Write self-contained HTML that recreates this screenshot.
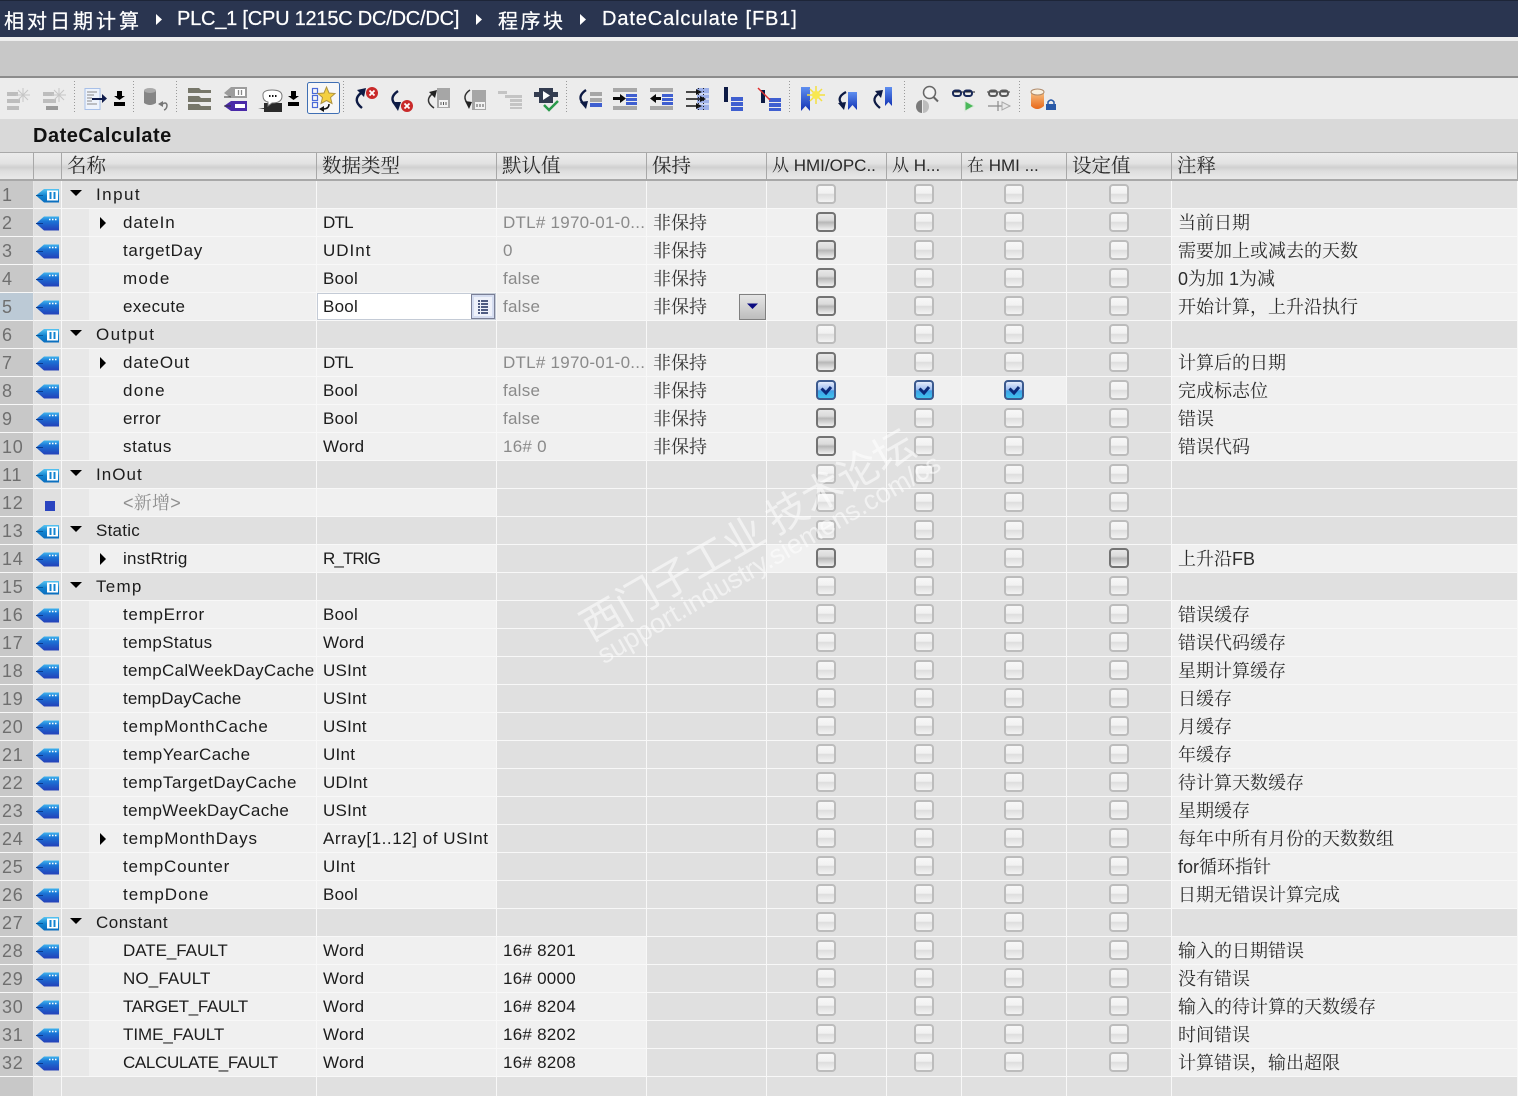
<!DOCTYPE html>
<html><head><meta charset="utf-8"><title>DateCalculate</title>
<style>
html,body{margin:0;padding:0;width:1518px;height:1096px;overflow:hidden;background:#e0e0e0}
body{position:relative;font-family:"Liberation Sans","Noto Serif CJK SC",serif;color:#1c1c1c}
.abs{position:absolute;white-space:nowrap}
#top{left:0;top:0;width:1518px;height:37px;background:#2a3550;border-top:1px solid #1d2538;box-sizing:border-box}
.tt{top:1px;height:37px;line-height:37px;color:#fff;font-size:20px;-webkit-text-stroke:.25px #fff;position:absolute;white-space:nowrap}
#h{left:0;top:152px;width:1518px;height:29px;display:flex;border-top:1px solid #a9a9a9;border-bottom:2px solid #a8a8a8;box-sizing:border-box}
#h div{box-sizing:border-box;border-right:1px solid #a8a8a8;background:linear-gradient(#ececec 0,#e2e2e2 40%,#d0d0d0 55%,#dedede 70%,#e9e9e9 100%);font-size:19.5px;line-height:26px;padding-left:5px;white-space:nowrap;overflow:hidden;color:#2a2a2a}
#h .l{font-size:17px}
.r{display:flex;height:28px}
.r p{margin:0;box-sizing:border-box;height:28px;border-right:1px solid #f8f8f8;border-bottom:1px solid #f8f8f8;background:#e0e0e0;overflow:hidden;white-space:nowrap;line-height:28px;font-size:17px;letter-spacing:.25px;position:relative}
.r p:nth-child(1){width:34px;background:#c8c8c8;color:#6f6f6f;padding-left:2px;font-size:18px;letter-spacing:.8px;border-right-color:#e6e6e6}
.r p:nth-child(2){width:28px}
.r p:nth-child(3){width:255px;background:linear-gradient(90deg,#e8e8e8 27px,#f0f0f0 27px);padding-left:61px}
.r p:nth-child(4){width:180px;background:#f0f0f0;padding-left:6px}
.r p:nth-child(5){width:150px;padding-left:6px;color:#8a8a8a}
.r p:nth-child(6){width:120px;padding-left:6px;font-size:18px;letter-spacing:0;color:#333}
.r p:nth-child(7){width:120px}
.r p:nth-child(8){width:75px}
.r p:nth-child(9){width:105px}
.r p:nth-child(10){width:105px}
.r p:nth-child(11){width:346px;background:#f0f0f0;padding-left:6px;font-size:18px;letter-spacing:0;color:#2c2c2c}
.g p:nth-child(3){background:#e0e0e0;padding-left:34px}
.g p:nth-child(4),.g p:nth-child(11){background:#e0e0e0}
.a p:nth-child(5),.a p:nth-child(6),.a p:nth-child(7),.k p:nth-child(5),.s p:nth-child(7),.d p:nth-child(8),.d p:nth-child(9){background:#f0f0f0}
.k p:nth-child(5){color:#1c1c1c}
.n p:nth-child(11){background:#e0e0e0}
.r a{position:absolute;top:3px;width:20px;height:20px;box-sizing:border-box;border:2px solid #bcbcbc;border-radius:4px;background:linear-gradient(#f8f8f8 0,#f1f1f1 45%,#dedede 52%,#f3f3f3 100%)}
.r p:nth-child(7) a{left:49px}.r p:nth-child(8) a{left:27px}.r p:nth-child(9) a{left:42px}.r p:nth-child(10) a{left:42px}
.a p:nth-child(7) a,.s p:nth-child(7) a,.s p:nth-child(10) a{border-color:#737373;background:linear-gradient(#e8e8e8 0,#dadada 38%,#b8b8b8 52%,#f0f0f0 100%)}
.r a.c,.a p:nth-child(7) a.c{border-color:#3c5a8e;background:linear-gradient(#e4ecfc 0,#9dbcf0 48%,#3f9fe6 55%,#3fc4ee 100%)}
.r a.c svg{position:absolute;left:1px;top:1px}
.r svg.t{position:absolute;left:2px;top:7px}
.dn{position:absolute;left:8px;top:9px;border-left:6px solid transparent;border-right:6px solid transparent;border-top:6px solid #000}
.rt{position:absolute;left:38px;top:8px;border-top:6px solid transparent;border-bottom:6px solid transparent;border-left:6px solid #000}
#wm{position:absolute;left:0;top:0;pointer-events:none}
</style></head><body>
<svg width="0" height="0" style="position:absolute"><defs>
<linearGradient id="gb" x1="0" y1="0" x2="0" y2="1"><stop offset="0" stop-color="#56c4f2"/><stop offset=".5" stop-color="#1283d0"/><stop offset="1" stop-color="#0b6dbd"/></linearGradient>
<linearGradient id="ib" x1="0" y1="0" x2="0" y2="1"><stop offset="0" stop-color="#3fb4ee"/><stop offset=".35" stop-color="#1b74d6"/><stop offset="1" stop-color="#2440b8"/></linearGradient>
<linearGradient id="bm" x1="0" y1="0" x2="0" y2="1"><stop offset="0" stop-color="#5f8ff0"/><stop offset="1" stop-color="#1233b4"/></linearGradient>
<linearGradient id="or" x1="0" y1="0" x2="0" y2="1"><stop offset="0" stop-color="#f8c080"/><stop offset="1" stop-color="#e8681a"/></linearGradient>
<symbol id="tg" viewBox="0 0 24 15"><path d="M0 7.5L8 1H23V14.500H8Z" fill="url(#gb)"/><path d="M0 7.5H7" stroke="#0a5a9e"/><rect x="11" y="2.500" width="11" height="10" fill="#fff"/><path d="M14.500 4V11M18.500 4V11" stroke="#1283d0" stroke-width="2"/></symbol>
<symbol id="ti" viewBox="0 0 24 15"><path d="M0 7.5L8 .5H23V14.500H8Z" fill="url(#ib)"/><path d="M0 7.5H7" stroke="#0a3a8e"/><path d="M13 3.500H14.500M16 3.500H17.500M19 3.500H20.500" stroke="#fff" stroke-width="1.600"/></symbol>
</defs></svg>

<div class="abs" id="top"></div>
<span class="tt" style="left:4px;font-family:'Noto Sans CJK SC',sans-serif;letter-spacing:3px">相对日期计算</span>
<span class="tt" style="left:177px;letter-spacing:-.22px">PLC_1 [CPU 1215C DC/DC/DC]</span>
<span class="tt" style="left:498px;font-family:'Noto Sans CJK SC',sans-serif;letter-spacing:2.500px">程序块</span>
<span class="tt" style="left:602px;letter-spacing:.88px">DateCalculate [FB1]</span>
<div class="abs" style="left:0;top:37px;width:1518px;height:4px;background:#eeeeee"></div>
<div class="abs" style="left:0;top:41px;width:1518px;height:35px;background:#c8c8c8"></div>
<div class="abs" style="left:0;top:76px;width:1518px;height:2px;background:#8c8c8c"></div>
<div class="abs" style="left:0;top:78px;width:1518px;height:41px;background:#ececec"></div>
<div class="abs" style="left:0;top:119px;width:1518px;height:33px;background:#d9d9d9"></div>
<div class="abs" style="left:33px;top:123px;font-size:20px;line-height:26px;font-weight:bold;letter-spacing:.5px;color:#111">DateCalculate</div>

<!-- toolbar -->
<svg class="abs" style="left:0;top:0" width="1518" height="120" viewBox="0 0 1518 120">
<path d="M156 14L162 19.500L156 25ZM476 14L482 19.500L476 25ZM580 14L586 19.500L580 25Z" fill="#fff"/>
<g stroke="#9a9a9a" stroke-width="1" stroke-dasharray="1 2"><path d="M74.500 81V114M133.500 81V114M176.500 81V114M343.500 81V114M566.500 81V114M789.500 81V114M904.500 81V114M1019.500 81V114"/></g>
<!-- 1,2 -->
<g fill="#bdbdbd"><rect x="7" y="92" width="11" height="4"/><rect x="7" y="99" width="13" height="4"/><rect x="7" y="106" width="12" height="4"/><rect x="43" y="92" width="11" height="4"/><rect x="43" y="99" width="13" height="4"/><rect x="46" y="106" width="12" height="4" fill="#9a9a9a"/></g>
<g stroke="#c6c6c6" stroke-width="1"><path d="M23 88V102M16 95H30M18 90L28 100M28 90L18 100M59 88V102M52 95H66M54 90L64 100M64 90L54 100"/></g>
<!-- 3 doc -->
<rect x="85" y="88.500" width="15" height="21" fill="#eef3fb" stroke="#a8c0e8"/><path d="M87 92H97M87 95H94M87 98H92M87 101H92M87 104H97" stroke="#8a8a8a"/>
<path d="M92 98H102V94L107 98.500L102 103V100H92Z" fill="#0e1a4a"/>
<path d="M117 91H122V96H125L119.500 100L114 96H117ZM114 102H125V106H114Z" fill="#000"/>
<!-- 5 cylinder -->
<path d="M144 91Q150 86 156 91V103Q150 107 144 103Z" fill="#858585"/><ellipse cx="150" cy="90.500" rx="6" ry="2.500" fill="#aaa"/><path d="M161 105Q166 101 167 105Q167 109 164 110" stroke="#777" stroke-width="1.500" fill="none"/><path d="M158 104L163 101V107Z" fill="#777"/>
<!-- 6 -->
<g fill="#77776a"><path d="M188 88H199L201 90H211V93H188Z"/><path d="M188 96H199L201 98H211V102H188Z"/><path d="M188 104H199L201 106H211V110H188Z"/></g>
<!-- 7 tags -->
<path d="M224 93L231 87H247V98H231Z" fill="#9c9c9c"/><rect x="235" y="89" width="10" height="7" fill="#fff"/><path d="M238.500 90V95M241.500 90V95" stroke="#888" stroke-width="1.300"/>
<path d="M224 106L231 101H247V111H231Z" fill="#4a2aa8"/><rect x="235" y="104" width="10" height="4" fill="#fff"/><path d="M224 97H231M224 106H231" stroke="#333"/>
<!-- 8 -->
<path d="M258 108H264V103H282V112H264V109Z" fill="#2b2b2b"/>
<path d="M263 94Q264 90 272 90Q282 90 282 96Q282 103 272 103L268 106V102Q263 101 263 96Z" fill="#fff" stroke="#777"/><path d="M269 96H270.500M272 96H273.500M275 96H276.500" stroke="#111" stroke-width="2"/>
<path d="M291 91H296V96H299L293.500 100L288 96H291ZM288 102H299V106H288Z" fill="#000"/>
<!-- highlight -->
<rect x="307.500" y="82.500" width="32" height="31" rx="2" fill="#f7f7f7" stroke="#3f6fb4"/>
<g fill="none" stroke="#4a6ad8" stroke-width="1.200"><rect x="312.500" y="88.500" width="5" height="5"/><rect x="312.500" y="95.500" width="5" height="5"/><rect x="312.500" y="102.500" width="5" height="5"/></g>
<path d="M326.500 87L329 93L335 93.500L330.500 97.500L332 103.500L326.500 100.500L321 103.500L322.500 97.500L318 93.500L324 93Z" fill="#f4d040" stroke="#b09440"/>
<path d="M329 104Q329 109 323 109" stroke="#111" stroke-width="1.500" fill="none"/><path d="M319 109L324 106V112Z" fill="#111"/>
<!-- 9 10 -->
<path d="M362 108Q352 100 361 93" stroke="#0d1a44" stroke-width="2.400" fill="none"/><path d="M357 90L366 88L364 97Z" fill="#0d1a44"/><circle cx="372" cy="93" r="6" fill="#c92a2a"/><path d="M369.500 90.500L374.500 95.500M374.500 90.500L369.500 95.500" stroke="#fff" stroke-width="1.800"/>
<path d="M398 91Q388 98 396 105" stroke="#0d1a44" stroke-width="2.400" fill="none"/><path d="M392 102L401 102L398 111Z" fill="#0d1a44"/><circle cx="407" cy="106" r="6" fill="#c92a2a"/><path d="M404.500 103.500L409.500 108.500M409.500 103.500L404.500 108.500" stroke="#fff" stroke-width="1.800"/>
<!-- 11 12 -->
<path d="M434 108Q424 101 432 94" stroke="#333" stroke-width="1.500" fill="none"/><path d="M429 92L437 90L435 98Z" fill="#222"/><rect x="437" y="88" width="13" height="20" fill="#a6a6a6"/><rect x="439" y="100" width="9" height="7" fill="#f2f2f2"/><path d="M441 102V105M443.500 102V105M446 102V105" stroke="#555"/>
<path d="M470 90Q461 96 468 104" stroke="#333" stroke-width="1.500" fill="none"/><path d="M465 101L472 102L469 109Z" fill="#222"/><rect x="472" y="90" width="14" height="20" fill="#a6a6a6"/><rect x="475" y="102" width="10" height="7" fill="#f2f2f2"/><path d="M477 104V107M480 104V107M483 104V107" stroke="#555"/>
<!-- 13 -->
<g fill="#c4c4c4"><rect x="498" y="91" width="9" height="3"/><rect x="505" y="95" width="17" height="3"/><rect x="510" y="99" width="12" height="3"/><rect x="510" y="103" width="12" height="3"/><rect x="510" y="107" width="12" height="2"/></g>
<!-- 14 -->
<path d="M534 92H539V88H553V92H558V97H553V103H539V97H534Z" fill="#333c50"/><path d="M543 91L550 95.500L543 100Z" fill="#fff"/><path d="M544 105L549 110L558 101" stroke="#2a9a4a" stroke-width="2.500" fill="none"/>
<!-- 15 -->
<path d="M586 90Q576 97 584 104" stroke="#0d1a44" stroke-width="2.300" fill="none"/><path d="M580 102L588 101L586 109Z" fill="#0d1a44"/><rect x="590" y="92" width="12" height="4" fill="#a6a6a6"/><rect x="590" y="98" width="12" height="4" fill="#a6a6a6"/><rect x="590" y="103" width="12" height="4" fill="#3f5fd0"/>
<!-- 16 17 -->
<g fill="#a8a8a8"><rect x="613" y="88" width="24" height="4"/><rect x="613" y="106" width="24" height="4"/><rect x="650" y="88" width="23" height="4"/><rect x="650" y="106" width="23" height="4"/></g>
<g fill="#3f5fd0"><rect x="626" y="94" width="11" height="3"/><rect x="626" y="98" width="11" height="3"/><rect x="626" y="102" width="11" height="3"/><rect x="662" y="94" width="11" height="3"/><rect x="662" y="98" width="11" height="3"/><rect x="662" y="102" width="11" height="3"/></g>
<path d="M613 97H620V94L626 98.500L620 103V100H613Z" fill="#0a0a0a"/><path d="M661 97H656V94L650 98.500L656 103V100H661Z" fill="#0a0a0a"/>
<!-- 18 -->
<rect x="697" y="88" width="12" height="22" fill="#9db0e8"/><g stroke="#fff"><path d="M697 94H709M697 99H709M697 104H709"/></g>
<g stroke="#111" stroke-width="1.600" fill="#111"><path d="M686 92H698M686 99H702M686 106H698" fill="none"/></g><path d="M696 89L702 92L696 95ZM700 96L706 99L700 102ZM696 103L702 106L696 109Z" fill="#111"/>
<path d="M698.500 88V110M703.500 88V110" stroke="#222" stroke-dasharray="1 2"/>
<!-- 19 20 -->
<rect x="724" y="87" width="4" height="15" fill="#0d1a44"/><g fill="#3f5fd0"><rect x="731" y="97" width="12" height="4"/><rect x="731" y="102" width="12" height="4"/><rect x="731" y="107" width="12" height="4"/><rect x="769" y="98" width="12" height="4"/><rect x="769" y="103" width="12" height="4"/><rect x="769" y="108" width="12" height="3"/></g>
<rect x="761" y="90" width="4" height="13" fill="#0d1a44"/><path d="M758 88L770 100" stroke="#e03030" stroke-width="1.500"/>
<!-- 21-23 -->
<path d="M801 87H810V111L805.500 106L801 111Z" fill="url(#bm)"/><path d="M816 86V104M807 95H825M810 89L822 101M822 89L810 101" stroke="#f4e040" stroke-width="1.500"/><circle cx="816" cy="95" r="4" fill="#f8e850"/>
<path d="M846 92Q835 98 843 105" stroke="#0d1a44" stroke-width="2.300" fill="none"/><path d="M838 103L846 102L844 110Z" fill="#0d1a44"/><path d="M848 92H857V110L852.500 105L848 110Z" fill="url(#bm)"/>
<path d="M880 108Q870 100 878 94" stroke="#0d1a44" stroke-width="2.300" fill="none"/><path d="M875 91L883 90L881 98Z" fill="#0d1a44"/><path d="M885 87H892V106L888.500 102L885 106Z" fill="url(#bm)"/>
<!-- 24 -->
<path d="M922 100A6 6.500 0 0 0 922 113Z" fill="#7a7a7a"/><path d="M923 100A6 6.500 0 0 1 923 113Z" fill="#bdbdbd"/><circle cx="929.500" cy="92.500" r="6" fill="#f4f4f4" stroke="#666" stroke-width="1.500"/><path d="M933.500 97L938 101.500" stroke="#666" stroke-width="2"/>
<!-- 25 26 -->
<path d="M952 92H975" stroke="#222" stroke-width="1"/><g fill="none" stroke="#1a2a5a" stroke-width="2"><rect x="953" y="90.500" width="8" height="5.500" rx="2.500"/><rect x="964" y="90.500" width="8" height="5.500" rx="2.500"/></g><path d="M965 101L974 106L965 111Z" fill="#4ab85a" stroke="#d8e8d8"/>
<path d="M987 92H1010" stroke="#444" stroke-width="1"/><g fill="none" stroke="#5a5a5a" stroke-width="2"><rect x="989" y="90.500" width="8" height="5.500" rx="2.500"/><rect x="1000" y="90.500" width="8" height="5.500" rx="2.500"/></g><path d="M988 106H1010M998 101V111" stroke="#8a8a8a" stroke-width="1.200"/><path d="M1002 102L1010 106L1002 110Z" fill="#e8e8e8" stroke="#aaa"/>
<!-- 27 -->
<path d="M1031 92V106Q1037 112 1044 106V92Z" fill="url(#or)"/><ellipse cx="1037.500" cy="92" rx="6.500" ry="3" fill="#f8f0e0" stroke="#b08a6a"/><path d="M1046 104H1056V110H1046Z" fill="#2a5aa8"/><path d="M1048 104V102Q1051 98 1054 102V104" fill="none" stroke="#2a5aa8" stroke-width="1.500"/>
</svg>

<!-- header -->
<div class="abs" id="h">
<div style="width:34px"></div><div style="width:28px"></div><div style="width:255px">名称</div><div style="width:180px">数据类型</div><div style="width:150px">默认值</div><div style="width:120px">保持</div><div style="width:120px" class="l">从 HMI/OPC..</div><div style="width:75px" class="l">从 H...</div><div style="width:105px" class="l">在 HMI ...</div><div style="width:105px">设定值</div><div style="width:346px">注释</div>
</div>

<!-- table -->
<div class="abs" style="left:0;top:181px;width:1518px">
<div class="r g"><p>1</p><p><svg class="t" width="24" height="15"><use href="#tg"/></svg></p><p style="letter-spacing:1.45px"><i class="dn"></i>Input</p><p></p><p></p><p></p><p><a></a></p><p><a></a></p><p><a></a></p><p><a></a></p><p></p></div>
<div class="r a"><p>2</p><p><svg class="t" width="24" height="15"><use href="#ti"/></svg></p><p style="letter-spacing:.9px"><i class="rt"></i>dateIn</p><p style="letter-spacing:-.75px">DTL</p><p>DTL# 1970-01-0...</p><p>非保持</p><p><a></a></p><p><a></a></p><p><a></a></p><p><a></a></p><p>当前日期</p></div>
<div class="r a"><p>3</p><p><svg class="t" width="24" height="15"><use href="#ti"/></svg></p><p style="letter-spacing:.7px">targetDay</p><p style="letter-spacing:1px">UDInt</p><p>0</p><p>非保持</p><p><a></a></p><p><a></a></p><p><a></a></p><p><a></a></p><p>需要加上或减去的天数</p></div>
<div class="r a"><p>4</p><p><svg class="t" width="24" height="15"><use href="#ti"/></svg></p><p style="letter-spacing:1.25px">mode</p><p>Bool</p><p>false</p><p>非保持</p><p><a></a></p><p><a></a></p><p><a></a></p><p><a></a></p><p>0为加 1为减</p></div>
<div class="r a"><p style="background:#bccad6">5</p><p><svg class="t" width="24" height="15"><use href="#ti"/></svg></p><p style="letter-spacing:.4px">execute</p><p style="background:#fff;box-shadow:inset 0 0 0 1px #c4cbd6">Bool<svg style="position:absolute;left:153px;top:0" width="26" height="27"><rect x="1.500" y="1.500" width="23" height="24" fill="#d4dcf0" stroke="#7a7f96"/><rect x="4" y="4" width="18" height="19" fill="#eef1fa"/><path d="M8 8H18M8 11H18M8 14H18M8 17H18M8 20H18" stroke="#1a2a5a" stroke-width="1.500" stroke-dasharray="2 1 7 0"/></svg></p><p>false</p><p>非保持<svg style="position:absolute;left:92px;top:1px" width="27" height="26"><defs><linearGradient id="dd" x1="0" y1="0" x2="0" y2="1"><stop offset="0" stop-color="#e6e6e6"/><stop offset=".5" stop-color="#d2d2d2"/><stop offset="1" stop-color="#bcbcbc"/></linearGradient></defs><rect x=".5" y=".5" width="26" height="25" fill="url(#dd)" stroke="#808080"/><path d="M8 9.500H19L13.500 15Z" fill="#0a0a80"/></svg></p><p><a></a></p><p><a></a></p><p><a></a></p><p><a></a></p><p>开始计算，上升沿执行</p></div>
<div class="r g"><p>6</p><p><svg class="t" width="24" height="15"><use href="#tg"/></svg></p><p style="letter-spacing:1.4px"><i class="dn"></i>Output</p><p></p><p></p><p></p><p><a></a></p><p><a></a></p><p><a></a></p><p><a></a></p><p></p></div>
<div class="r a"><p>7</p><p><svg class="t" width="24" height="15"><use href="#ti"/></svg></p><p style="letter-spacing:.95px"><i class="rt"></i>dateOut</p><p style="letter-spacing:-.75px">DTL</p><p>DTL# 1970-01-0...</p><p>非保持</p><p><a></a></p><p><a></a></p><p><a></a></p><p><a></a></p><p>计算后的日期</p></div>
<div class="r a d"><p>8</p><p><svg class="t" width="24" height="15"><use href="#ti"/></svg></p><p style="letter-spacing:1.25px">done</p><p>Bool</p><p>false</p><p>非保持</p><p><a class="c"><svg width="14" height="14"><path d="M2.500 5.500L7 10L12 4" stroke="#0b2a78" stroke-width="3" fill="none"/></svg></a></p><p><a class="c"><svg width="14" height="14"><path d="M2.500 5.500L7 10L12 4" stroke="#0b2a78" stroke-width="3" fill="none"/></svg></a></p><p><a class="c"><svg width="14" height="14"><path d="M2.500 5.500L7 10L12 4" stroke="#0b2a78" stroke-width="3" fill="none"/></svg></a></p><p><a></a></p><p>完成标志位</p></div>
<div class="r a"><p>9</p><p><svg class="t" width="24" height="15"><use href="#ti"/></svg></p><p style="letter-spacing:.45px">error</p><p>Bool</p><p>false</p><p>非保持</p><p><a></a></p><p><a></a></p><p><a></a></p><p><a></a></p><p>错误</p></div>
<div class="r a"><p>10</p><p><svg class="t" width="24" height="15"><use href="#ti"/></svg></p><p style="letter-spacing:.6px">status</p><p>Word</p><p>16# 0</p><p>非保持</p><p><a></a></p><p><a></a></p><p><a></a></p><p><a></a></p><p>错误代码</p></div>
<div class="r g"><p>11</p><p><svg class="t" width="24" height="15"><use href="#tg"/></svg></p><p style="letter-spacing:1.05px"><i class="dn"></i>InOut</p><p></p><p></p><p></p><p><a></a></p><p><a></a></p><p><a></a></p><p><a></a></p><p></p></div>
<div class="r n"><p>12</p><p><span style="position:absolute;left:11px;top:12px;width:10px;height:10px;background:#2a44c0"></span></p><p style="color:#8f8f8f;font-size:18px">&lt;新增&gt;</p><p></p><p></p><p></p><p><a></a></p><p><a></a></p><p><a></a></p><p><a></a></p><p></p></div>
<div class="r g"><p>13</p><p><svg class="t" width="24" height="15"><use href="#tg"/></svg></p><p><i class="dn"></i>Static</p><p></p><p></p><p></p><p><a></a></p><p><a></a></p><p><a></a></p><p><a></a></p><p></p></div>
<div class="r s"><p>14</p><p><svg class="t" width="24" height="15"><use href="#ti"/></svg></p><p><i class="rt"></i>instRtrig</p><p style="letter-spacing:-.9px">R_TRIG</p><p></p><p></p><p><a></a></p><p><a></a></p><p><a></a></p><p><a></a></p><p>上升沿FB</p></div>
<div class="r g"><p>15</p><p><svg class="t" width="24" height="15"><use href="#tg"/></svg></p><p style="letter-spacing:1.25px"><i class="dn"></i>Temp</p><p></p><p></p><p></p><p><a></a></p><p><a></a></p><p><a></a></p><p><a></a></p><p></p></div>
<div class="r"><p>16</p><p><svg class="t" width="24" height="15"><use href="#ti"/></svg></p><p style="letter-spacing:.7px">tempError</p><p>Bool</p><p></p><p></p><p><a></a></p><p><a></a></p><p><a></a></p><p><a></a></p><p>错误缓存</p></div>
<div class="r"><p>17</p><p><svg class="t" width="24" height="15"><use href="#ti"/></svg></p><p style="letter-spacing:.35px">tempStatus</p><p>Word</p><p></p><p></p><p><a></a></p><p><a></a></p><p><a></a></p><p><a></a></p><p>错误代码缓存</p></div>
<div class="r"><p>18</p><p><svg class="t" width="24" height="15"><use href="#ti"/></svg></p><p style="letter-spacing:.3px">tempCalWeekDayCache</p><p>USInt</p><p></p><p></p><p><a></a></p><p><a></a></p><p><a></a></p><p><a></a></p><p>星期计算缓存</p></div>
<div class="r"><p>19</p><p><svg class="t" width="24" height="15"><use href="#ti"/></svg></p><p style="letter-spacing:.1px">tempDayCache</p><p>USInt</p><p></p><p></p><p><a></a></p><p><a></a></p><p><a></a></p><p><a></a></p><p>日缓存</p></div>
<div class="r"><p>20</p><p><svg class="t" width="24" height="15"><use href="#ti"/></svg></p><p style="letter-spacing:.82px">tempMonthCache</p><p>USInt</p><p></p><p></p><p><a></a></p><p><a></a></p><p><a></a></p><p><a></a></p><p>月缓存</p></div>
<div class="r"><p>21</p><p><svg class="t" width="24" height="15"><use href="#ti"/></svg></p><p style="letter-spacing:.48px">tempYearCache</p><p>UInt</p><p></p><p></p><p><a></a></p><p><a></a></p><p><a></a></p><p><a></a></p><p>年缓存</p></div>
<div class="r"><p>22</p><p><svg class="t" width="24" height="15"><use href="#ti"/></svg></p><p style="letter-spacing:.53px">tempTargetDayCache</p><p>UDInt</p><p></p><p></p><p><a></a></p><p><a></a></p><p><a></a></p><p><a></a></p><p>待计算天数缓存</p></div>
<div class="r"><p>23</p><p><svg class="t" width="24" height="15"><use href="#ti"/></svg></p><p style="letter-spacing:.37px">tempWeekDayCache</p><p>USInt</p><p></p><p></p><p><a></a></p><p><a></a></p><p><a></a></p><p><a></a></p><p>星期缓存</p></div>
<div class="r"><p>24</p><p><svg class="t" width="24" height="15"><use href="#ti"/></svg></p><p style="letter-spacing:.85px"><i class="rt"></i>tempMonthDays</p><p style="letter-spacing:.55px">Array[1..12] of USInt</p><p></p><p></p><p><a></a></p><p><a></a></p><p><a></a></p><p><a></a></p><p>每年中所有月份的天数数组</p></div>
<div class="r"><p>25</p><p><svg class="t" width="24" height="15"><use href="#ti"/></svg></p><p style="letter-spacing:.8px">tempCounter</p><p>UInt</p><p></p><p></p><p><a></a></p><p><a></a></p><p><a></a></p><p><a></a></p><p>for循环指针</p></div>
<div class="r"><p>26</p><p><svg class="t" width="24" height="15"><use href="#ti"/></svg></p><p style="letter-spacing:1px">tempDone</p><p>Bool</p><p></p><p></p><p><a></a></p><p><a></a></p><p><a></a></p><p><a></a></p><p>日期无错误计算完成</p></div>
<div class="r g"><p>27</p><p><svg class="t" width="24" height="15"><use href="#tg"/></svg></p><p style="letter-spacing:.5px"><i class="dn"></i>Constant</p><p></p><p></p><p></p><p><a></a></p><p><a></a></p><p><a></a></p><p><a></a></p><p></p></div>
<div class="r k"><p>28</p><p><svg class="t" width="24" height="15"><use href="#ti"/></svg></p><p style="letter-spacing:-.05px">DATE_FAULT</p><p>Word</p><p>16# 8201</p><p></p><p><a></a></p><p><a></a></p><p><a></a></p><p><a></a></p><p>输入的日期错误</p></div>
<div class="r k"><p>29</p><p><svg class="t" width="24" height="15"><use href="#ti"/></svg></p><p style="letter-spacing:.12px">NO_FAULT</p><p>Word</p><p>16# 0000</p><p></p><p><a></a></p><p><a></a></p><p><a></a></p><p><a></a></p><p>没有错误</p></div>
<div class="r k"><p>30</p><p><svg class="t" width="24" height="15"><use href="#ti"/></svg></p><p style="letter-spacing:-.33px">TARGET_FAULT</p><p>Word</p><p>16# 8204</p><p></p><p><a></a></p><p><a></a></p><p><a></a></p><p><a></a></p><p>输入的待计算的天数缓存</p></div>
<div class="r k"><p>31</p><p><svg class="t" width="24" height="15"><use href="#ti"/></svg></p><p style="letter-spacing:-.05px">TIME_FAULT</p><p>Word</p><p>16# 8202</p><p></p><p><a></a></p><p><a></a></p><p><a></a></p><p><a></a></p><p>时间错误</p></div>
<div class="r k"><p>32</p><p><svg class="t" width="24" height="15"><use href="#ti"/></svg></p><p style="letter-spacing:-.35px">CALCULATE_FAULT</p><p>Word</p><p>16# 8208</p><p></p><p><a></a></p><p><a></a></p><p><a></a></p><p><a></a></p><p>计算错误，输出超限</p></div>
<div class="r g" style="height:19px"><p></p><p></p><p></p><p></p><p></p><p></p><p></p><p></p><p></p><p></p><p></p></div>
</div>

<!-- watermark -->
<svg id="wm" width="1518" height="1096" viewBox="0 0 1518 1096">
<g transform="translate(591,642) rotate(-30)" fill="#ffffff" fill-opacity=".55">
<text x="0" y="0" font-family="'Noto Sans CJK SC',sans-serif" font-size="41">西门子工业 技术论坛</text>
<text x="0" y="26" font-family="'Liberation Sans',sans-serif" font-size="27">support.industry.siemens.com/cs</text>
</g>
</svg>
</body></html>
